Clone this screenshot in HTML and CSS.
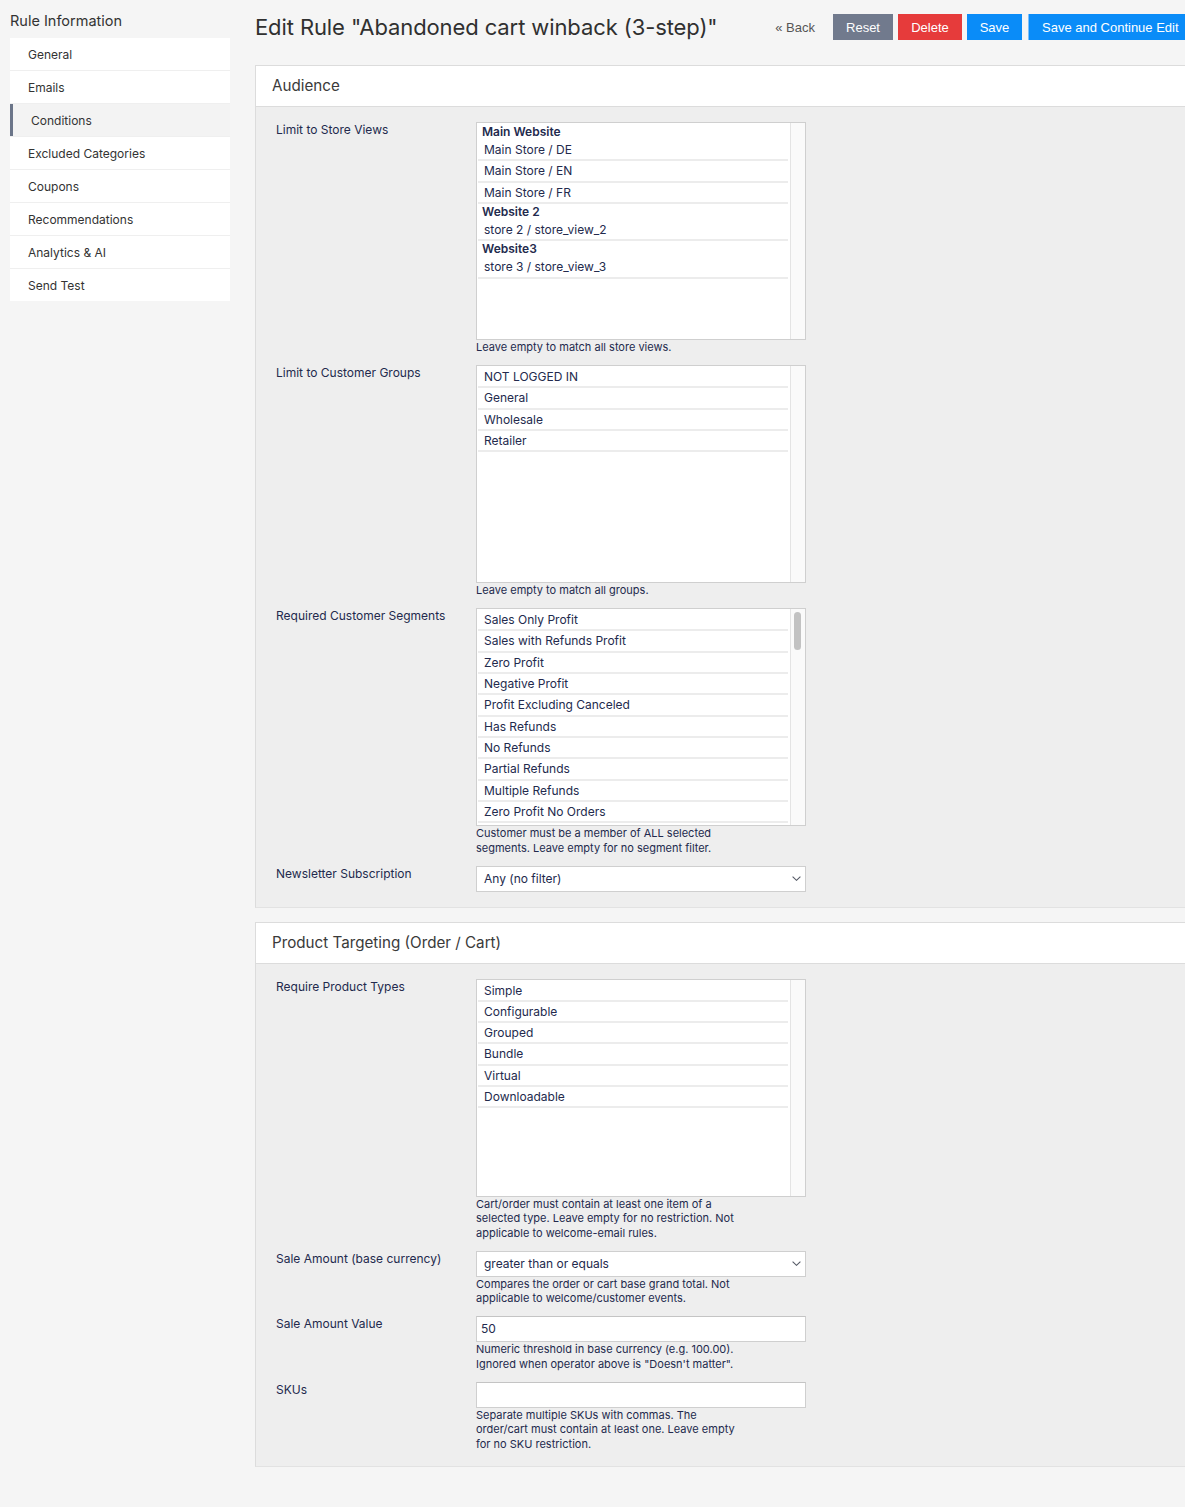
FILE: index.html
```html
<!DOCTYPE html>
<html lang="en">
<head>
<meta charset="utf-8">
<title>Edit Rule</title>
<link rel="stylesheet" href="styles.css">
</head>
<body>
<div class="page">
  <aside class="sidebar">
    <div class="side-title">Rule Information</div>
    <ul class="side-nav">
      <li class="side-item">General</li>
      <li class="side-item">Emails</li>
      <li class="side-item active">Conditions</li>
      <li class="side-item">Excluded Categories</li>
      <li class="side-item">Coupons</li>
      <li class="side-item">Recommendations</li>
      <li class="side-item">Analytics &amp; AI</li>
      <li class="side-item">Send Test</li>
    </ul>
  </aside>

  <main class="main">
    <div class="topbar">
      <h1 class="page-title">Edit Rule "Abandoned cart winback (3-step)"</h1>
      <div class="actions">
        <span class="back">« Back</span>
        <button class="btn btn-reset">Reset</button>
        <button class="btn btn-delete">Delete</button>
        <button class="btn btn-save">Save</button>
        <button class="btn btn-save btn-continue">Save and Continue Edit</button>
      </div>
    </div>

    <section class="card">
      <div class="card-head">Audience</div>
      <div class="card-body">
        <div class="row">
          <div class="label">Limit to Store Views</div>
          <div class="field">
            <div class="listbox">
              <div class="list">
                <div class="group">Main Website</div>
                <div class="opt">Main Store / DE</div>
                <div class="opt">Main Store / EN</div>
                <div class="opt">Main Store / FR</div>
                <div class="group">Website 2</div>
                <div class="opt">store 2 / store_view_2</div>
                <div class="group">Website3</div>
                <div class="opt">store 3 / store_view_3</div>
              </div>
              <div class="track"></div>
            </div>
            <div class="help">Leave empty to match all store views.</div>
          </div>
        </div>

        <div class="row">
          <div class="label">Limit to Customer Groups</div>
          <div class="field">
            <div class="listbox">
              <div class="list">
                <div class="opt">NOT LOGGED IN</div>
                <div class="opt">General</div>
                <div class="opt">Wholesale</div>
                <div class="opt">Retailer</div>
              </div>
              <div class="track"></div>
            </div>
            <div class="help">Leave empty to match all groups.</div>
          </div>
        </div>

        <div class="row">
          <div class="label">Required Customer Segments</div>
          <div class="field">
            <div class="listbox">
              <div class="list">
                <div class="opt">Sales Only Profit</div>
                <div class="opt">Sales with Refunds Profit</div>
                <div class="opt">Zero Profit</div>
                <div class="opt">Negative Profit</div>
                <div class="opt">Profit Excluding Canceled</div>
                <div class="opt">Has Refunds</div>
                <div class="opt">No Refunds</div>
                <div class="opt">Partial Refunds</div>
                <div class="opt">Multiple Refunds</div>
                <div class="opt">Zero Profit No Orders</div>
                <div class="opt">High Value Customers</div>
                <div class="opt">Repeat Buyers</div>
              </div>
              <div class="track"><div class="thumb"></div></div>
            </div>
            <div class="help">Customer must be a member of ALL selected segments. Leave empty for no segment filter.</div>
          </div>
        </div>

        <div class="row">
          <div class="label">Newsletter Subscription</div>
          <div class="field">
            <div class="select">
              <span>Any (no filter)</span>
              <svg class="chev" width="9" height="5" viewBox="0 0 9 5"><path d="M0.6 0.6l3.9 3.7 3.9-3.7" fill="none" stroke="#555a66" stroke-width="1.1"/></svg>
            </div>
          </div>
        </div>
      </div>
    </section>

    <section class="card">
      <div class="card-head">Product Targeting (Order / Cart)</div>
      <div class="card-body">
        <div class="row">
          <div class="label">Require Product Types</div>
          <div class="field">
            <div class="listbox">
              <div class="list">
                <div class="opt">Simple</div>
                <div class="opt">Configurable</div>
                <div class="opt">Grouped</div>
                <div class="opt">Bundle</div>
                <div class="opt">Virtual</div>
                <div class="opt">Downloadable</div>
              </div>
              <div class="track"></div>
            </div>
            <div class="help">Cart/order must contain at least one item of a selected type. Leave empty for no restriction. Not applicable to welcome-email rules.</div>
          </div>
        </div>

        <div class="row">
          <div class="label">Sale Amount (base currency)</div>
          <div class="field">
            <div class="select">
              <span>greater than or equals</span>
              <svg class="chev" width="9" height="5" viewBox="0 0 9 5"><path d="M0.6 0.6l3.9 3.7 3.9-3.7" fill="none" stroke="#555a66" stroke-width="1.1"/></svg>
            </div>
            <div class="help">Compares the order or cart base grand total. Not applicable to welcome/customer events.</div>
          </div>
        </div>

        <div class="row">
          <div class="label">Sale Amount Value</div>
          <div class="field">
            <div class="input">50</div>
            <div class="help">Numeric threshold in base currency (e.g. 100.00). Ignored when operator above is "Doesn't matter".</div>
          </div>
        </div>

        <div class="row">
          <div class="label">SKUs</div>
          <div class="field">
            <div class="input"></div>
            <div class="help">Separate multiple SKUs with commas. The order/cart must contain at least one. Leave empty for no SKU restriction.</div>
          </div>
        </div>
      </div>
    </section>
  </main>
</div>
</body>
</html>
```

FILE: styles.css
```css
* { box-sizing: border-box; }

html, body {
  margin: 0;
  padding: 0;
  background: #f5f5f5;
  overflow-x: hidden;
}

body {
  font-family: Inter, "Noto Sans", "Liberation Sans", sans-serif;
  color: #232a4d;
  min-height: 1507px;
}

.page {
  display: flex;
  align-items: flex-start;
  padding-left: 10px;
  width: 1200px;
}

/* Sidebar */
.sidebar {
  width: 220px;
  flex: none;
  padding-top: 11px;
}

.side-title {
  font-size: 14.5px;
  line-height: 20px;
  color: #333;
  margin-bottom: 7px;
}

.side-nav {
  list-style: none;
  margin: 0;
  padding: 0;
  display: flex;
  flex-direction: column;
  gap: 1px;
  background: #efefef;
}

.side-item {
  height: 32px;
  line-height: 33px;
  padding-left: 18px;
  background: #fff;
  font-size: 12px;
  color: #333;
}

.side-item.active {
  background: #f3f3f3;
  border-left: 3px solid #6b7589;
  padding-left: 18px;
}

/* Main */
.main {
  margin-left: 25px;
  width: 935px;
  flex: none;
}

.topbar {
  display: flex;
  align-items: center;
  height: 30px;
  margin-top: 12px;
  margin-bottom: 23px;
}

.page-title {
  margin: 0;
  font-size: 22px;
  font-weight: 400;
  color: #303030;
  white-space: nowrap;
  letter-spacing: -0.1px;
}

.actions {
  margin-left: auto;
  display: flex;
  align-items: center;
  gap: 5px;
}

.back {
  font-family: "Liberation Sans", Arial, sans-serif;
  font-size: 13px;
  color: #555;
  margin-right: 13px;
}

.btn {
  font-family: "Liberation Sans", Arial, sans-serif;
  height: 26px;
  border: 0;
  padding: 0;
  font-size: 13px;
  color: #fff;
  cursor: pointer;
}

.btn-reset { background: #717a8d; width: 60px; }
.btn-delete { background: #e63b3b; width: 64px; }
.btn-save { background: #0a8cf8; width: 55px; }
.btn-continue { width: 162px; padding-left: 13px; text-align: left; border-left: 1px solid #7ec0fb; margin-left: 1px; }

/* Cards */
.card {
  border-top: 1px solid #dcdcdc;
  border-left: 1px solid #dcdcdc;
  border-bottom: 1px solid #e2e2e2;
  margin-bottom: 14px;
}

.card-head {
  background: #fff;
  height: 41px;
  line-height: 40px;
  padding-left: 16px;
  font-size: 15.2px;
  color: #3a3a3a;
  border-bottom: 1px solid #dcdcdc;
}

.card-body {
  background: #eeeeee;
  padding: 15px 0 15px 20px;
  display: flex;
  flex-direction: column;
  gap: 10.5px;
}

.row {
  display: flex;
  align-items: flex-start;
}

.label {
  width: 200px;
  flex: none;
  font-size: 12px;
  line-height: 15px;
  color: #232a4d;
}

.field {
  width: 330px;
  flex: none;
}

.help {
  margin-top: 0;
  max-width: 265px;
  font-size: 11px;
  line-height: 14.5px;
  color: #232a4d;
}

/* Listbox */
.listbox {
  height: 218px;
  background: #fff;
  border: 1px solid #cfcfcf;
  display: flex;
}

.list {
  flex: 1;
  overflow: hidden;
  padding: 1px 2px 0 1px;
}

.group {
  font-weight: 600;
  font-size: 12px;
  line-height: 15px;
  padding: 0 4px 1px 4px;
  color: #232a4d;
}

.opt {
  font-size: 12px;
  line-height: 15.33px;
  padding: 2px 6px 2px 6px;
  border-bottom: 2px solid #ececec;
  color: #232a4d;
  white-space: nowrap;
}

.track {
  width: 15px;
  flex: none;
  background: #fafafa;
  border-left: 1px solid #e4e4e4;
  padding: 3px 0 0 3px;
}

.thumb {
  width: 7px;
  height: 38px;
  border-radius: 4px;
  background: #c2c2c2;
}

/* Select & input */
.select {
  height: 26px;
  background: #fff;
  border: 1px solid #cfcfcf;
  display: flex;
  align-items: center;
  justify-content: space-between;
  padding: 0 4px 0 7px;
  font-size: 12px;
  color: #232a4d;
}

.chev { display: block; }

.input {
  height: 26px;
  background: #fff;
  border: 1px solid #cfcfcf;
  border-top-color: #c4c4c4;
  padding: 0 4px;
  line-height: 24px;
  font-size: 12px;
  color: #232a4d;
}
```
